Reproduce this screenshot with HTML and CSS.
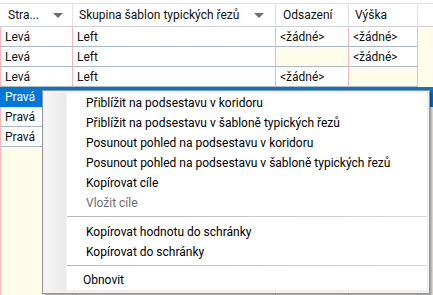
FILE: index.html
```html
<!DOCTYPE html>
<html lang="cs">
<head>
  <meta charset="UTF-8" />
  <title>Mřížka podsestav</title>
  <link rel="stylesheet" href="styles.css">
</head>
<body>
  <div class="grid">
    <div class="row head">
      <div class="hcell"><span>Stra...</span><i class="sort"></i></div>
      <div class="hcell wide"><span>Skupina šablon typických řezů</span><i class="sort"></i></div>
      <div class="hcell">Odsazení</div>
      <div class="hcell">Výška</div>
      <div class="hcell end"></div>
    </div>
    <div class="row">
      <div class="cell">Levá</div>
      <div class="cell">Left</div>
      <div class="cell">&lt;žádné&gt;</div>
      <div class="cell">&lt;žádné&gt;</div>
      <div class="fill"></div>
    </div>
    <div class="row">
      <div class="cell">Levá</div>
      <div class="cell">Left</div>
      <div class="cell empty"></div>
      <div class="cell">&lt;žádné&gt;</div>
      <div class="fill"></div>
    </div>
    <div class="row">
      <div class="cell">Levá</div>
      <div class="cell">Left</div>
      <div class="cell">&lt;žádné&gt;</div>
      <div class="cell empty"></div>
      <div class="fill"></div>
    </div>
    <div class="row selected">
      <div class="cell">Pravá</div>
      <div class="cell"></div>
      <div class="cell"></div>
      <div class="cell"></div>
      <div class="fill"></div>
    </div>
    <div class="row">
      <div class="cell">Pravá</div>
      <div class="cell"></div>
      <div class="cell"></div>
      <div class="cell"></div>
      <div class="fill"></div>
    </div>
    <div class="row">
      <div class="cell">Pravá</div>
      <div class="cell"></div>
      <div class="cell"></div>
      <div class="cell"></div>
      <div class="fill"></div>
    </div>
    <div class="row rest">
      <div class="cell"></div>
      <div class="cell"></div>
      <div class="cell"></div>
      <div class="cell"></div>
      <div class="fill"></div>
    </div>
  </div>

  <div class="menu">
    <div class="menu-body">
      <div class="item">Přiblížit na podsestavu v koridoru</div>
      <div class="item">Přiblížit na podsestavu v šabloně typických řezů</div>
      <div class="item">Posunout pohled na podsestavu v koridoru</div>
      <div class="item">Posunout pohled na podsestavu v šabloně typických řezů</div>
      <div class="item">Kopírovat cíle</div>
      <div class="item disabled">Vložit cíle</div>
      <div class="sep"></div>
      <div class="item">Kopírovat hodnotu do schránky</div>
      <div class="item">Kopírovat do schránky</div>
      <div class="sep short"></div>
      <div class="item last">Obnovit</div>
    </div>
  </div>
</body>
</html>
```

FILE: styles.css
```css
html, body {
  margin: 0;
  height: 295px;
  overflow: hidden;
}
body {
  font-family: Roboto, "Noto Sans", sans-serif;
  font-size: 12px;
  color: #111;
  background: #fff;
  position: relative;
}
.grid {
  display: flex;
  flex-direction: column;
  height: 100%;
  padding-top: 3px;
  box-sizing: border-box;
}
.row {
  display: grid;
  grid-template-columns: 73px 203px 73px 69px 1fr;
  height: 20px;
  background: #fffcea;
}
.head {
  height: 24px;
  background: #fff;
  border-top: 1px solid #e3e3e3;
  border-bottom: 1px solid #d2d2d2;
  box-sizing: border-box;
}
.hcell {
  display: flex;
  align-items: center;
  justify-content: space-between;
  padding: 0 9px 0 8px;
  border-right: 1px solid #e2e2e2;
  box-sizing: border-box;
  white-space: nowrap;
  overflow: hidden;
}
.hcell.wide { padding: 0 11px 0 6px; }
.hcell:nth-child(3) { padding-left: 7px; }
.hcell:nth-child(4) { padding-left: 6px; }
.hcell.end { border-right: none; }
.sort {
  flex-shrink: 0;
  width: 0;
  height: 0;
  border-left: 5px solid transparent;
  border-right: 5px solid transparent;
  border-top: 5px solid #6f6f6f;
}
.cell {
  display: flex;
  align-items: center;
  padding: 0 4px;
  background: #fff;
  border-right: 1px solid #f4baba;
  border-bottom: 1px solid #a9bacb;
  box-sizing: border-box;
  white-space: nowrap;
  overflow: hidden;
}
.cell:first-child {
  border-left: 1px solid #f4baba;
}
.cell.empty {
  background: #fffcea;
}
.selected .cell,
.selected .fill {
  background: #0078d7;
  color: #fff;
  border-color: #0078d7;
}
.rest {
  flex: 1;
}
.rest .cell {
  background: #fffcea;
  border-bottom: none;
}

.menu {
  position: absolute;
  left: 42px;
  top: 90px;
  width: 388px;
  height: 204px;
  box-sizing: border-box;
  border: 1px solid #979797;
  background: #f0f0f0;
  padding: 2px 2px 3px 2px;
  box-shadow: 2px 2px 3px rgba(0, 0, 0, 0.4);
}
.menu-body {
  height: 100%;
  background: linear-gradient(to right, #f6f6f6 0, #e9e9e9 21px, #fff 22px);
}
.item {
  height: 20px;
  line-height: 20px;
  padding-left: 41px;
  white-space: nowrap;
  color: #000;
}
.item.disabled {
  color: #6d6d6d;
}
.item.last {
  padding-left: 38px;
}
.sep {
  height: 9px;
  margin-left: 22px;
  position: relative;
}
.sep::after {
  content: "";
  position: absolute;
  left: 0;
  right: 0;
  top: 3px;
  height: 1px;
  background: linear-gradient(to right, #b8b8b8, #d6d6d6);
}
.sep.short {
  height: 8px;
}
```
